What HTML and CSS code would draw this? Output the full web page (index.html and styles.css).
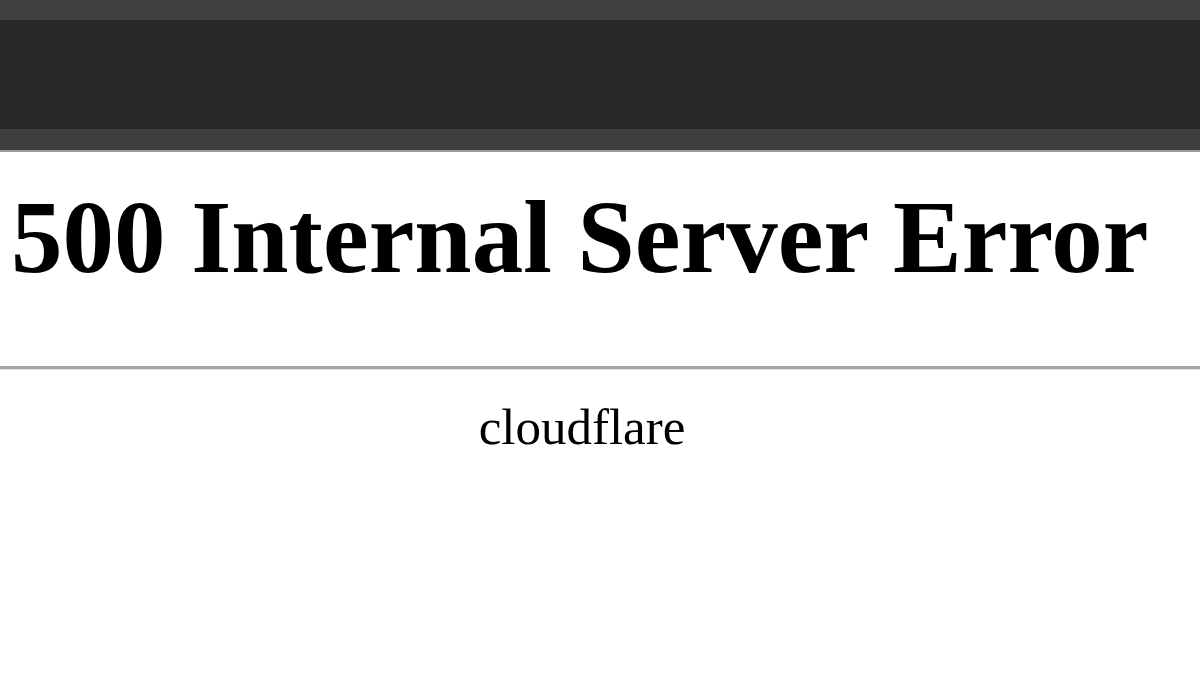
FILE: index.html
```html
<!DOCTYPE html>
<html>
<head>
<meta charset="utf-8">
<title>500 Internal Server Error</title>
<link rel="stylesheet" href="styles.css">
</head>
<body>
<div class="bar"></div>
<div class="bar-edge"></div>
<h1 class="title">500 Internal Server Error</h1>
<div class="rule"></div>
<div class="footer">cloudflare</div>
</body>
</html>
```
FILE: styles.css
```css
html, body {
  margin: 0;
  padding: 0;
  background: #ffffff;
}
body {
  font-family: "Liberation Serif", "Times New Roman", serif;
  color: #000;
}
.bar {
  height: 109px;
  background: #282828;
  border-top: 20px solid #404040;
  border-bottom: 21px solid #3e3e3e;
}
.bar-edge {
  height: 2px;
  background: #9a9a9a;
}
.title {
  margin: 34px 0 0 0;
  padding-left: 11px;
  font-size: 103px;
  line-height: 1;
  font-weight: bold;
  white-space: nowrap;
}
.rule {
  margin-top: 77px;
  height: 3px;
  background: #a6a6a6;
  border-bottom: 1px solid #e2e2e2;
}
.footer {
  margin-top: 32px;
  padding-right: 36px;
  text-align: center;
  font-size: 51px;
  line-height: 1;
}
```
